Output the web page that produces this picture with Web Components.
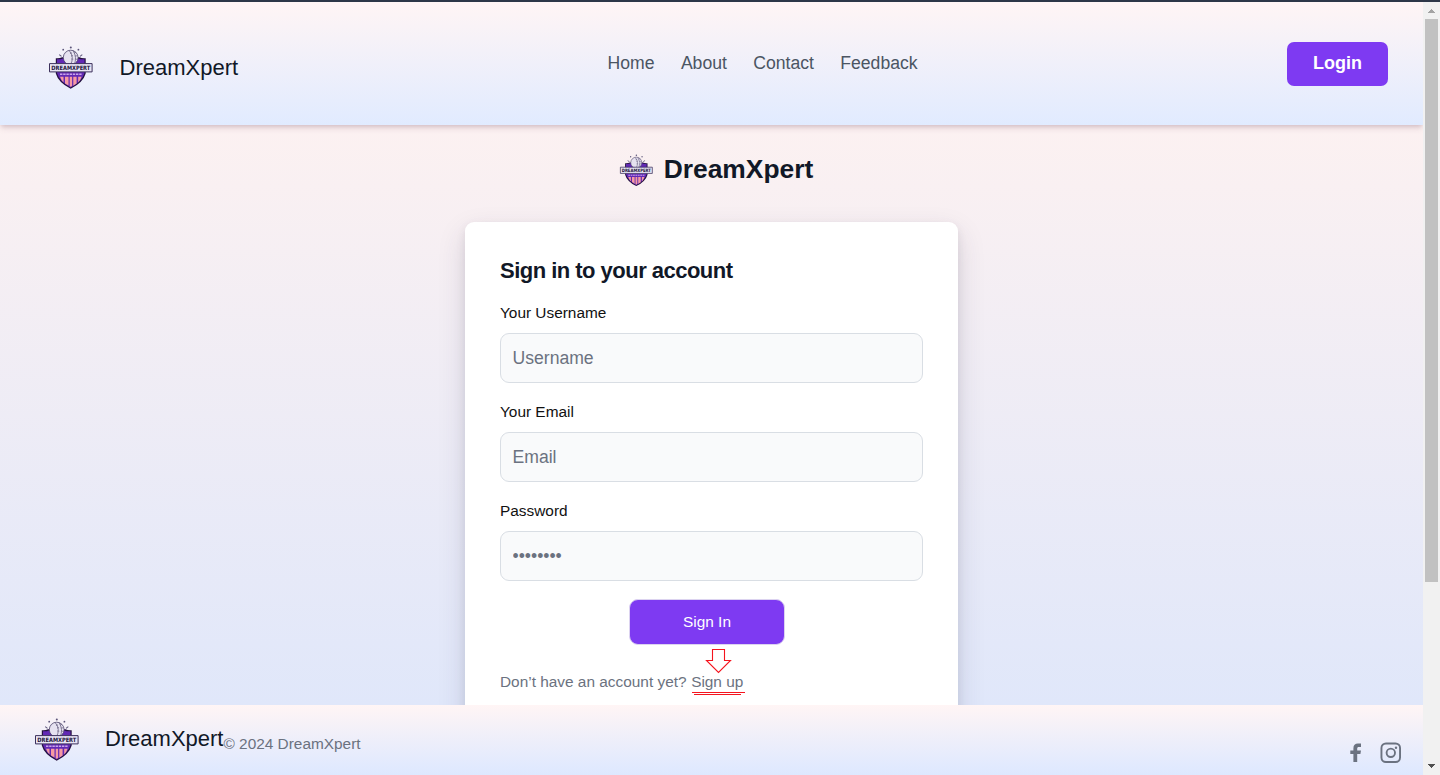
<!DOCTYPE html>
<html lang="en">
<head>
<meta charset="utf-8">
<title>DreamXpert</title>
<style>
html, body { margin: 0; height: 100%; overflow: hidden; font-family: "Liberation Sans", Arial, sans-serif; }
</style>
</head>
<body>
<dx-app></dx-app>
<script>
const define = (name, html) => customElements.define(name, class extends HTMLElement {
  constructor() {
    super();
    const t = document.createElement('template');
    t.innerHTML = html;
    this.attachShadow({ mode: 'open' }).append(t.content.cloneNode(true));
  }
  connectedCallback() {
    const input = this.shadowRoot.querySelector('input');
    if (input) {
      input.type = this.getAttribute('type') || 'text';
      input.placeholder = this.getAttribute('placeholder') || '';
      input.setAttribute('aria-label', this.getAttribute('label') || '');
    }
  }
});

define('dx-logo', `
<style>:host{display:block;width:44px;height:44px;flex:none} svg{display:block;width:100%;height:100%;overflow:visible}</style>
<svg viewBox="0 0 44 44">
  <g fill="#5a5378"><circle cx="21.800" cy="1.600" r="1"/><circle cx="14.200" cy="3.700" r=".9"/><circle cx="29.400" cy="3.700" r=".9"/><path d="M10.500 8.300l2.300 1.700-.6.800-2.300-1.700zM33 8.300l-2.300 1.700.6.800 2.300-1.700z"/></g>
  <path d="M6.800 12.200Q10.500 12.600 13 11.200h17.500q2.500 1.400 6.200 1V27.500q-2.500 9-15 15.300Q9.300 36.500 6.800 27.500z" fill="#24113f"/>
  <path d="M8 13.300Q11.500 13.600 14 12.400h15.500q2.500 1.200 6 .9V27q-2.500 8.700-13.800 14.400Q10.500 35.700 8 27z" fill="#6229b4"/>
  <circle cx="21.700" cy="11.600" r="7.400" fill="#e6e2f0" stroke="#4d4469" stroke-width=".8"/>
  <path d="M20.500 5q5 6 1 14M24 4.500q4.500 7 1 14.500" stroke="#6a6283" stroke-width=".8" fill="none"/>
  <path d="M21 7.500l2-.7M22 10l2-.4M22.300 13l2 .2M25 7l2-.7M26 10l2-.2M26.200 13l2 .4" stroke="#6b6381" stroke-width=".7"/>
  <path d="M11 30.800h3.500v5.700q-2.500-2.500-3.500-5.700zM16 30.800h3.500v8.700L16 37.400zM20.700 30.800h2.400v9.200l-1.400.8-1-.6zM24.300 30.800h3.300v6.800l-3.300 2.200zM29.200 30.800h3.400q-1 3.200-3.400 5.700z" fill="#f69aa2"/>
  <path d="M11 28.300h22" stroke="#c9a5ea" stroke-width="1.600" stroke-dasharray="2.400 .8"/>
  <path d="M.5 17.600h42.600v8.300H.5z" fill="#e9e5f4" stroke="#3c315c" stroke-width="1"/>
  <text x="21.800" y="24" text-anchor="middle" font-family="DejaVu Sans, sans-serif" font-weight="700" font-size="6" textLength="39" lengthAdjust="spacingAndGlyphs" fill="#20133b">DREAMXPERT</text>
</svg>`);

define('dx-header', `
<style>
:host{display:grid;grid-template-columns:1fr auto 1fr;align-items:start;box-sizing:border-box;height:123px;padding:40px 35px 0 48.500px;background:linear-gradient(#fff5f5,#e1ebff);box-shadow:0 4px 6px -1px #7040582e,0 2px 4px -1px #70405828;position:relative;z-index:1}
.brand{display:flex;align-items:center;gap:27px;font-size:22px;line-height:31px;color:#111827;padding-top:4px}
.brand span{padding-bottom:2px}
nav{display:flex;gap:26.400px;font-size:17.600px;line-height:26px;color:#4b5563;padding-top:8px;margin-left:88.600px}
button{justify-self:end;font:bold 18px/26px "Liberation Sans",Arial,sans-serif;width:101px;height:44px;padding:0 0 2px;color:#fff;background:#7e3af2;border:0;border-radius:7px}
</style>
<div class="brand"><dx-logo></dx-logo><span>DreamXpert</span></div>
<nav><span>Home</span><span>About</span><span>Contact</span><span>Feedback</span></nav>
<button>Login</button>`);

define('dx-field', `
<style>
:host{display:block}
label{display:block;font-size:15.400px;line-height:22px;color:#111;margin-bottom:9px}
input{display:block;box-sizing:border-box;width:100%;height:50px;border:1px solid #d9dee4;border-radius:9px;background:#f9fafb;padding:0 11.500px;font:17.600px "Liberation Sans",Arial,sans-serif}
input::placeholder{color:#6b7280;opacity:1}
</style>
<label><slot></slot></label><input>`);

define('dx-card', `
<style>
:host{display:block;box-sizing:border-box;width:493px;height:560px;flex:none;background:#fff;border-radius:9px;padding:33px 35px;box-shadow:0 11px 28px #38304c26,0 4px 10px #38304c18}
h1{font-size:22px;line-height:31px;letter-spacing:-.52px;color:#111827;margin:0 0 16px}
form{display:grid;gap:18px}
button{font:15.400px "Liberation Sans",Arial,sans-serif;width:156px;height:46px;color:#fff;background:#7e3af2;border:1px solid #dcd3f0;border-radius:9px;margin-left:129px;padding:0 0 1px}
.hint{display:flex;gap:4.600px;font-size:15.400px;line-height:22px;color:#6b7280;margin-top:8px;position:relative}
svg{position:absolute;left:190px;top:-25px;width:56px;height:50px;overflow:visible;fill:none;stroke:#f5141e}
</style>
<h1>Sign in to your account</h1>
<form>
<dx-field placeholder="Username" label="Username">Your Username</dx-field>
<dx-field placeholder="Email" label="Email">Your Email</dx-field>
<dx-field type="password" placeholder="••••••••" label="Password">Password</dx-field>
<button type="button">Sign In</button>
<div class="hint"><span>Don’t have an account yet?</span><span>Sign up</span><svg viewBox="0 0 56 50"><path stroke-width="1.100" d="M22.500 3.500h12v11h6L28.500 26.500 16.500 14.500h6z"/><g fill="#f5141e" stroke="none"><rect x="2" y="46" width="53" height="1"/><rect x="4" y="48" width="47" height="1"/></g></svg></div>
</form>`);

define('dx-main', `
<style>
:host{display:flex;flex-direction:column;align-items:center;min-height:0;overflow:hidden;background:linear-gradient(#fcf1f1,#e0e7fa)}
.title{display:flex;flex:none;align-items:center;gap:11px;height:34px;margin:28px 0 35px -1px;padding-left:11px;font-size:26.400px;font-weight:700;color:#111827}
.title span{padding-bottom:1px}
.title dx-logo{width:33px;height:33px}
</style>
<div class="title"><dx-logo></dx-logo><span>DreamXpert</span></div>
<dx-card></dx-card>`);

define('dx-footer', `
<style>
:host{display:flex;box-sizing:border-box;height:70px;padding:13px 21px 0 34.500px;background:linear-gradient(#fff5f5,#dde8ff);position:relative}
.name{font-size:22px;line-height:31px;color:#111827;margin:5px 0 0 26.400px}
.copy{font-size:15.400px;line-height:22px;color:#6b7280;margin-top:15px}
.social{display:flex;gap:18px;margin:25px 0 0 auto;color:#6b7280}
svg{display:block}
</style>
<dx-logo></dx-logo><span class="name">DreamXpert</span><span class="copy">© 2024 DreamXpert</span>
<div class="social">
<svg width="12" height="20" viewBox="0 0 12 20"><path fill="currentColor" d="M3.400 19V11H.300V7.500h3.100V5.200C3.400 2 5.100.500 7.900.500H11v3.600H8.900c-1.300 0-1.700.600-1.700 1.500v1.900H11L10.400 11H7.200v8z"/></svg>
<svg width="22" height="22" viewBox="0 0 22 22" fill="none" stroke="currentColor" stroke-width="1.900" style="margin-top:-1px"><rect x="1.450" y="1.450" width="18.600" height="18.600" rx="4.500"/><circle cx="10.800" cy="10.800" r="4.200"/><circle cx="16" cy="5.700" r="1.200" fill="currentColor" stroke="none"/></svg>
</div>`);

define('dx-scrollbar', `
<style>
:host{display:grid;grid-template-rows:17px 1fr 17px;justify-items:center;background:#f1f1f1}
svg{display:block;width:17px;height:17px}
i{display:block;width:13px;height:563px;background:#c1c1c1}
</style>
<svg viewBox="0 0 17 17" shape-rendering="crispEdges"><path fill="#a3a3a3" d="M8 7h1v1h1v1h1v1h1v1H5v-1h1V9h1V8h1z"/></svg>
<i></i>
<svg viewBox="0 0 17 17" shape-rendering="crispEdges"><path fill="#505050" d="M5 6h7v1h-1v1h-1v1H9v1H8V9H7V8H6V7H5z"/></svg>`);

define('dx-app', `
<style>
:host{display:grid;box-sizing:border-box;grid-template-columns:1423px 17px;width:1440px;height:775px;border-top:2px solid #2d3748;overflow:hidden}
.page{display:grid;grid-template-rows:123px 580px 70px;min-width:0;overflow:hidden}
</style>
<div class="page"><dx-header></dx-header><dx-main></dx-main><dx-footer></dx-footer></div>
<dx-scrollbar></dx-scrollbar>`);
</script>
</body>
</html>
